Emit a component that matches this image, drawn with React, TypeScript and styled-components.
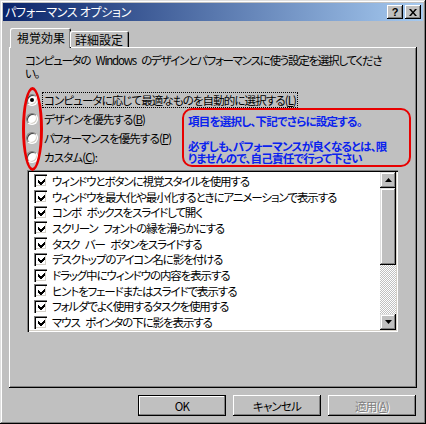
import React from "react";
import styled, { createGlobalStyle, css } from "styled-components";

const GlobalStyle = createGlobalStyle`
  html, body { margin: 0; padding: 0; background: #c0c0c0; }
  body {
    font-family: "Noto Sans CJK JP", "Noto Sans", sans-serif;
    font-size: 12px;
    font-feature-settings: "palt";
    color: #000;
  }
  * { box-sizing: border-box; }
`;

const Window = styled.div`
  width: 426px;
  height: 424px;
  background: #c0c0c0;
  padding: 3px;
  box-shadow: inset -1px -1px 0 #000, inset 1px 1px 0 #dfdfdf,
    inset -2px -2px 0 #808080, inset 2px 2px 0 #fff;
  display: flex;
  flex-direction: column;
`;

const TitleBar = styled.div`
  height: 18px;
  background: linear-gradient(to right, #0a246a, #a6caf0);
  display: flex;
  align-items: center;
  justify-content: space-between;
  padding: 0 2px 0 2px;
`;

const TitleText = styled.span`
  color: #fff;
  font-size: 12px;
  line-height: 18px;
  letter-spacing: -0.3px;
`;

const TitleButtons = styled.div`
  display: flex;
  gap: 2px;
`;

const TitleButton = styled.div`
  width: 16px;
  height: 14px;
  background: #c0c0c0;
  box-shadow: inset -1px -1px 0 #000, inset 1px 1px 0 #fff,
    inset -2px -2px 0 #808080;
  display: flex;
  align-items: center;
  justify-content: center;
  font-family: "Liberation Sans", sans-serif;
  font-weight: bold;
  font-size: 11px;
  line-height: 14px;
`;

const Body = styled.div`
  flex: 1;
  display: flex;
  flex-direction: column;
  padding: 7px 6px 0 6px;
`;

const TabStrip = styled.div`
  display: flex;
  align-items: flex-end;
  height: 19px;
  padding-left: 1px;
  position: relative;
  z-index: 1;
`;

const Tab = styled.div<{ $active?: boolean }>`
  background: #c0c0c0;
  border-top-left-radius: 2px;
  border-top-right-radius: 2px;
  box-shadow: inset 1px 1px 0 #fff, inset -1px 0 0 #000, inset -2px 0 0 #808080;
  line-height: 15px;
  font-size: 12px;
  ${(p) =>
    p.$active
      ? css`
          height: 20px;
          padding: 2px 6px 0 7px;
          margin-bottom: -1px;
        `
      : css`
          height: 16px;
          padding: 1px 6px 0 5px;
          margin-left: -1px;
        `}
`;

const Panel = styled.div`
  position: relative;
  height: 341px;
  background: #c0c0c0;
  box-shadow: inset -1px -1px 0 #000, inset 1px 1px 0 #fff,
    inset -2px -2px 0 #808080;
  padding: 7px 0 0 16px;
  display: flex;
  flex-direction: column;
`;

const Description = styled.p`
  margin: 0;
  line-height: 13px;
  font-size: 11.5px;
  letter-spacing: -1.25px;
  word-spacing: 4px;
  white-space: pre;
`;

const RadioGroup = styled.div`
  margin-top: 10px;
  margin-left: 1px;
  display: flex;
  flex-direction: column;
`;

const RadioRow = styled.div`
  height: 19px;
  display: flex;
  align-items: center;
  gap: 5px;
`;

const RadioCircle = styled.span<{ $checked?: boolean }>`
  width: 12px;
  height: 12px;
  border-radius: 50%;
  background: #fff;
  border: 1px solid;
  border-color: #808080 #fff #fff #808080;
  box-shadow: inset 1px 1px 0 #404040, inset -1px -1px 0 #d4d0c8;
  display: flex;
  align-items: center;
  justify-content: center;
  flex: none;
  &::after {
    content: "";
    width: 4px;
    height: 4px;
    border-radius: 50%;
    background: ${(p) => (p.$checked ? "#000" : "transparent")};
  }
`;

const Label = styled.span<{ $focused?: boolean }>`
  line-height: 14px;
  font-size: 11.5px;
  letter-spacing: -0.9px;
  white-space: nowrap;
  padding: 0 1px;
  outline: ${(p) => (p.$focused ? "1px dotted #000" : "none")};
`;

const Key = styled.span`
  text-decoration: underline;
`;

const ListBox = styled.div`
  margin-top: 4px;
  margin-left: 2px;
  width: 371px;
  height: 162px;
  background: #fff;
  box-shadow: inset 1px 1px 0 #808080, inset 2px 2px 0 #000,
    inset -1px -1px 0 #fff, inset -2px -2px 0 #d4d0c8;
  padding: 2px;
  display: flex;
`;

const ListItems = styled.div`
  flex: 1;
  padding: 1px 0 0 5px;
  display: flex;
  flex-direction: column;
`;

const ItemRow = styled.div`
  height: 16px;
  display: flex;
  align-items: center;
  gap: 5px;
  white-space: pre;
  font-size: 11.5px;
  letter-spacing: -1.1px;
  word-spacing: 4px;
  line-height: 14px;
`;

const CheckBox = styled.span`
  width: 13px;
  height: 13px;
  flex: none;
  background: #fff;
  box-shadow: inset 1px 1px 0 #808080, inset 2px 2px 0 #000,
    inset -1px -1px 0 #fff, inset -2px -2px 0 #d4d0c8;
  display: flex;
  align-items: center;
  justify-content: center;
  padding: 1px 0 0 1px;
`;

const ScrollBar = styled.div`
  width: 16px;
  display: flex;
  flex-direction: column;
`;

const ScrollButton = styled.div`
  height: 16px;
  background: #c0c0c0;
  box-shadow: inset -1px -1px 0 #000, inset 1px 1px 0 #dfdfdf,
    inset -2px -2px 0 #808080, inset 2px 2px 0 #fff;
  display: flex;
  align-items: center;
  justify-content: center;
`;

const Thumb = styled(ScrollButton)`
  height: 77px;
`;

const Track = styled.div`
  flex: 1;
  background-color: #c0c0c0;
  background-image: conic-gradient(
    #fff 25%,
    #c0c0c0 0 50%,
    #fff 0 75%,
    #c0c0c0 0
  );
  background-size: 2px 2px;
`;

const Ellipse = styled.div`
  position: absolute;
  left: 13px;
  top: 40px;
  width: 21px;
  height: 84px;
  border: 3px solid #e80000;
  border-radius: 50%;
`;

const NoteBox = styled.div`
  position: absolute;
  left: 173px;
  top: 61px;
  width: 229px;
  height: 59px;
  border: 2px solid #e80000;
  border-radius: 10px;
  padding: 5px 0 0 4px;
  color: #0a22ee;
  font-weight: bold;
  font-size: 11.5px;
  line-height: 12px;
  letter-spacing: -0.75px;
  white-space: nowrap;
`;

const NoteLine = styled.div<{ $gap?: boolean }>`
  margin-top: ${(p) => (p.$gap ? "13px" : "0")};
`;

const ButtonRow = styled.div`
  display: flex;
  justify-content: flex-end;
  gap: 7px;
  padding: 7px 1px 0 0;
`;

const DialogButton = styled.div<{ $default?: boolean; $disabled?: boolean }>`
  width: 88px;
  height: 21px;
  background: #c0c0c0;
  display: flex;
  align-items: center;
  justify-content: center;
  font-size: 11.5px;
  line-height: 14px;
  letter-spacing: -0.8px;
  box-shadow: ${(p) =>
    p.$default
      ? "inset 0 0 0 1px #000, inset -2px -2px 0 #808080, inset 2px 2px 0 #fff"
      : "inset -1px -1px 0 #000, inset 1px 1px 0 #fff, inset -2px -2px 0 #808080"};
  color: ${(p) => (p.$disabled ? "#808080" : "#000")};
  text-shadow: ${(p) => (p.$disabled ? "1px 1px 0 #fff" : "none")};
`;

const items = [
  "ウィンドウとボタンに視覚スタイルを使用する",
  "ウィンドウを最大化や最小化するときにアニメーションで表示する",
  "コンボ ボックスをスライドして開く",
  "スクリーン フォントの縁を滑らかにする",
  "タスク バー ボタンをスライドする",
  "デスクトップのアイコン名に影を付ける",
  "ドラッグ中にウィンドウの内容を表示する",
  "ヒントをフェードまたはスライドで表示する",
  "フォルダでよく使用するタスクを使用する",
  "マウス ポインタの下に影を表示する",
];

const radios: { text: string; key: string; checked?: boolean; suffix?: string }[] = [
  { text: "コンピュータに応じて最適なものを自動的に選択する", key: "L", checked: true },
  { text: "デザインを優先する", key: "B" },
  { text: "パフォーマンスを優先する", key: "P" },
  { text: "カスタム", key: "C", suffix: ":" },
];

const Check = () => (
  <svg width="7" height="7" viewBox="0 0 7 7" shapeRendering="crispEdges">
    <path d="M0 2 L2.5 4.5 L7 0 L7 3 L2.5 7.5 L0 5 Z" fill="#000" />
  </svg>
);

const UpArrow = () => (
  <svg width="7" height="4" viewBox="0 0 7 4">
    <path d="M3.5 0 L7 4 L0 4 Z" fill="#000" />
  </svg>
);

const DownArrow = () => (
  <svg width="7" height="4" viewBox="0 0 7 4">
    <path d="M0 0 L7 0 L3.5 4 Z" fill="#000" />
  </svg>
);

export default function App() {
  return (
    <>
      <GlobalStyle />
      <Window>
        <TitleBar>
          <TitleText>パフォーマンス オプション</TitleText>
          <TitleButtons>
            <TitleButton>?</TitleButton>
            <TitleButton>
              <svg width="8" height="7" viewBox="0 0 8 7">
                <path d="M0 0 L2 0 L4 2.5 L6 0 L8 0 L5 3.5 L8 7 L6 7 L4 4.5 L2 7 L0 7 L3 3.5 Z" fill="#000" />
              </svg>
            </TitleButton>
          </TitleButtons>
        </TitleBar>
        <Body>
          <TabStrip>
            <Tab $active>視覚効果</Tab>
            <Tab>詳細設定</Tab>
          </TabStrip>
          <Panel>
            <Description>
              {"コンピュータの Windows のデザインとパフォーマンスに使う設定を選択してくださ"}
              <br />
              い。
            </Description>
            <RadioGroup>
              {radios.map((r, i) => (
                <RadioRow key={r.key}>
                  <RadioCircle $checked={r.checked} />
                  <Label $focused={i === 0}>
                    {r.text}(<Key>{r.key}</Key>){r.suffix}
                  </Label>
                </RadioRow>
              ))}
            </RadioGroup>
            <ListBox>
              <ListItems>
                {items.map((t) => (
                  <ItemRow key={t}>
                    <CheckBox>
                      <Check />
                    </CheckBox>
                    <span>{t}</span>
                  </ItemRow>
                ))}
              </ListItems>
              <ScrollBar>
                <ScrollButton>
                  <UpArrow />
                </ScrollButton>
                <Thumb />
                <Track />
                <ScrollButton>
                  <DownArrow />
                </ScrollButton>
              </ScrollBar>
            </ListBox>
            <Ellipse />
            <NoteBox>
              <NoteLine>項目を選択し、下記でさらに設定する。</NoteLine>
              <NoteLine $gap>必ずしも、パフォーマンスが良くなるとは、限</NoteLine>
              <NoteLine>りませんので、自己責任で行って下さい</NoteLine>
            </NoteBox>
          </Panel>
          <ButtonRow>
            <DialogButton $default>OK</DialogButton>
            <DialogButton>キャンセル</DialogButton>
            <DialogButton $disabled>
              適用(<Key>A</Key>)
            </DialogButton>
          </ButtonRow>
        </Body>
      </Window>
    </>
  );
}
